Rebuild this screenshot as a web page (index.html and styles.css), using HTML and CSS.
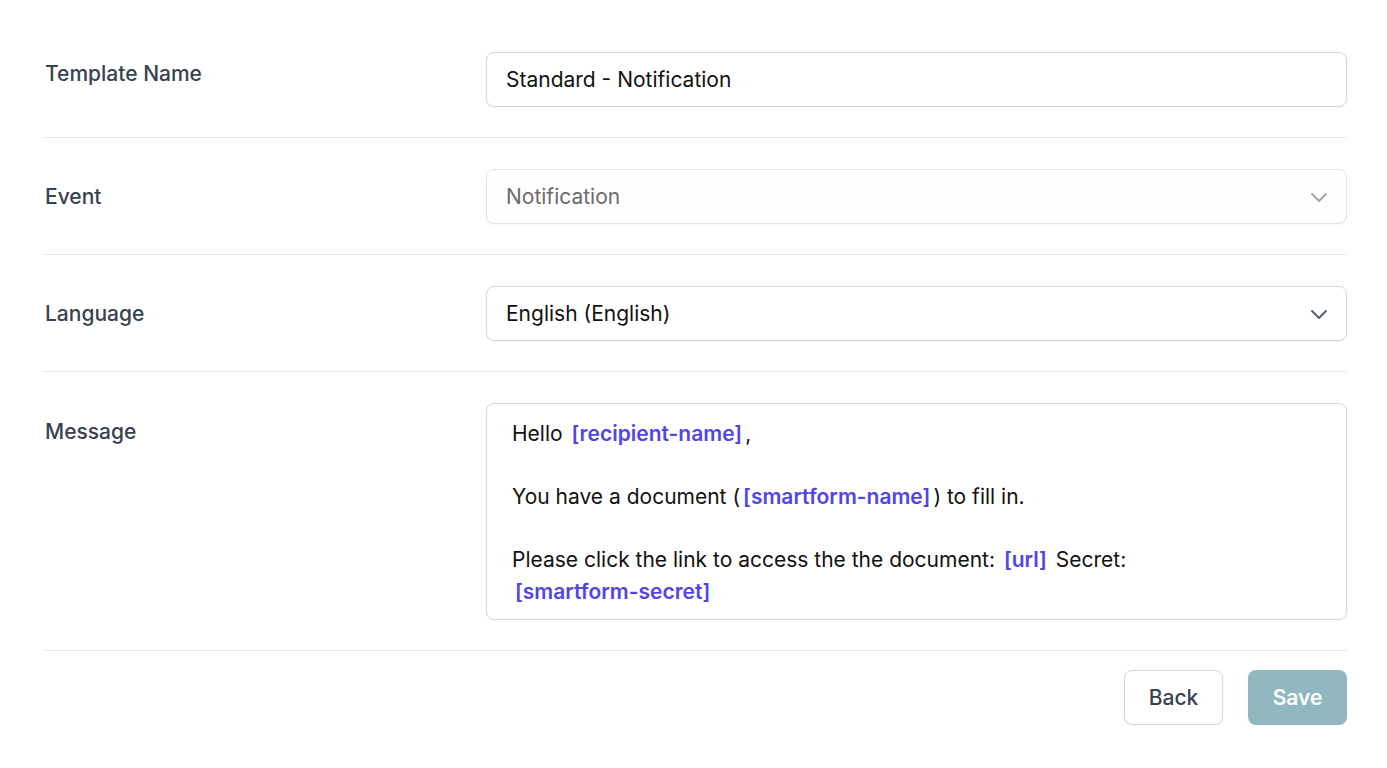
FILE: index.html
```html
<!DOCTYPE html>
<html lang="en">
<head>
<meta charset="utf-8">
<title>Template</title>
<link rel="stylesheet" href="styles.css">
</head>
<body>
<div class="form">
  <div class="row row-first">
    <label class="label">Template Name</label>
    <div class="field"><div class="input">Standard - Notification</div></div>
  </div>
  <div class="row">
    <label class="label">Event</label>
    <div class="field">
      <div class="input select disabled">
        <span>Notification</span>
        <svg class="chev" width="20" height="20" viewBox="0 0 20 20" fill="none"><path d="M3 7l7 7 7-7" stroke="currentColor" stroke-width="1.9" stroke-linecap="round" stroke-linejoin="round"/></svg>
      </div>
    </div>
  </div>
  <div class="row">
    <label class="label">Language</label>
    <div class="field">
      <div class="input select">
        <span>English (English)</span>
        <svg class="chev" width="20" height="20" viewBox="0 0 20 20" fill="none"><path d="M3 7l7 7 7-7" stroke="currentColor" stroke-width="1.9" stroke-linecap="round" stroke-linejoin="round"/></svg>
      </div>
    </div>
  </div>
  <div class="row">
    <label class="label label-msg">Message</label>
    <div class="field">
      <div class="editor">
        <p>Hello <span class="tag">[recipient-name]</span>,</p>
        <p><br></p>
        <p>You have a document (<span class="tag">[smartform-name]</span>) to fill in.</p>
        <p><br></p>
        <p>Please click the link to access the the document: <span class="tag">[url]</span> Secret: <span class="tag">[smartform-secret]</span></p>
      </div>
    </div>
  </div>
  <div class="actions">
    <button class="btn btn-back">Back</button>
    <button class="btn btn-save">Save</button>
  </div>
</div>
</body>
</html>
```

FILE: styles.css
```css
* { box-sizing: border-box; }
html, body { margin: 0; padding: 0; background: #fff; }
body {
  font-family: Inter, "Noto Sans", "Liberation Sans", sans-serif;
  color: #111827;
}
.form {
  padding: 21px 40px 0 44px;
}
.row {
  display: grid;
  grid-template-columns: 442px 1fr;
  padding: 31px 0 30px;
  border-bottom: 1px solid #e5e7eb;
}
.label {
  font-size: 21px;
  font-weight: 500;
  color: #374151;
  line-height: 26px;
  padding-top: 15px;
  padding-left: 1px;
}
.row-first .label { padding-top: 9px; }
.label-msg { padding-top: 16px; }
.input {
  height: 55px;
  border: 1px solid #d4d5dd;
  border-radius: 8px;
  padding: 0 19px;
  display: flex;
  align-items: center;
  font-size: 21px;
  color: #111;
  background: #fff;
  box-shadow: 0 1px 2px rgba(0,0,0,0.04);
}
.select { justify-content: space-between; padding-right: 17px; }
.chev { color: #535b6b; }
.disabled { color: #6b6b6b; border-color: #e2e3e8; background: #fefefe; }
.disabled .chev { color: #a3a3a3; }
.editor {
  border: 1px solid #d4d5dd;
  border-radius: 8px;
  padding: 14px 24px 12px 25px;
  font-size: 21px;
  line-height: 31.5px;
  color: #111;
  box-shadow: 0 1px 2px rgba(0,0,0,0.04);
}
.editor p { margin: 0; }
.tag {
  color: #5046e5;
  font-weight: 600;
  padding: 0 3px;
  white-space: nowrap;
}
.actions {
  display: flex;
  justify-content: flex-end;
  gap: 25px;
  padding-top: 19px;
}
.btn {
  height: 55px;
  width: 99px;
  border-radius: 8px;
  font-family: inherit;
  font-size: 21px;
  font-weight: 500;
  cursor: pointer;
}
.btn-back {
  background: #fff;
  border: 1px solid #d4d5dd;
  color: #374151;
  box-shadow: 0 1px 2px rgba(0,0,0,0.05);
}
.btn-save {
  background: #91b7bf;
  border: none;
  color: #fff;
  font-weight: 600;
}
```
